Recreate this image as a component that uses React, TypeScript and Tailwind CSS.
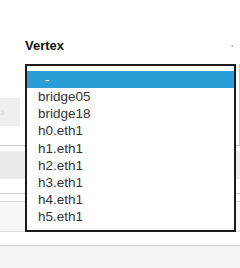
const options = ['-', 'bridge05', 'bridge18', 'h0.eth1', 'h1.eth1', 'h2.eth1', 'h3.eth1', 'h4.eth1', 'h5.eth1'];

function VertexList() {
  return (
    <div className="absolute left-[25px] top-[64px] flex h-[168px] w-[211px] flex-col border-2 border-[#1c1c1c] bg-white pt-[5px]">
      {options.map((opt, i) => (
        <div
          key={opt}
          className={
            i === 0
              ? 'flex h-[17.2px] items-center bg-[#2b9ed8] pl-[18px] text-[13.5px] leading-none text-white'
              : 'flex h-[17.2px] items-center pl-[11px] text-[13.5px] leading-none text-[#333333]'
          }
        >
          {opt}
        </div>
      ))}
    </div>
  );
}

export default function App() {
  return (
    <div className="relative flex h-[268px] w-[240px] flex-col overflow-hidden bg-white font-['Liberation_Sans',Arial,sans-serif]">
      <div className="flex h-[145px] flex-col">
        <div className="flex pl-[25px] pt-[38px]">
          <div className="w-[214px] text-[13px] font-bold leading-[15px] text-[#111111]">Vertex</div>
          <div className="w-[10px] overflow-hidden text-[13px] font-bold leading-[15px] text-[#bbbbbb]">·</div>
        </div>
        <div className="flex flex-1 pt-[11px]">
          <div className="flex w-[239px] flex-col">
            <div className="mt-[34px] flex h-[28px] w-[20px] items-center bg-[#eeeeee] text-[10px] text-[#cccccc]">
              <span className="ml-px">›</span>
            </div>
          </div>
          <div className="w-px self-stretch bg-[#cccccc]" />
        </div>
      </div>
      <div className="h-px bg-[#cccccc]" />
      <div className="h-[5px]" />
      <div className="h-[28px] bg-[#ececec]" />
      <div className="h-[14px]" />
      <div className="h-px bg-[#cccccc]" />
      <div className="h-[7px]" />
      <div className="h-px bg-[#dddddd]" />
      <div className="h-[29px] bg-[#f7f7f7]" />
      <div className="h-px bg-[#dddddd]" />
      <div className="h-[13px]" />
      <div className="h-px bg-[#cccccc]" />
      <div className="flex-1 bg-[#f5f5f5]" />
      <VertexList />
    </div>
  );
}
